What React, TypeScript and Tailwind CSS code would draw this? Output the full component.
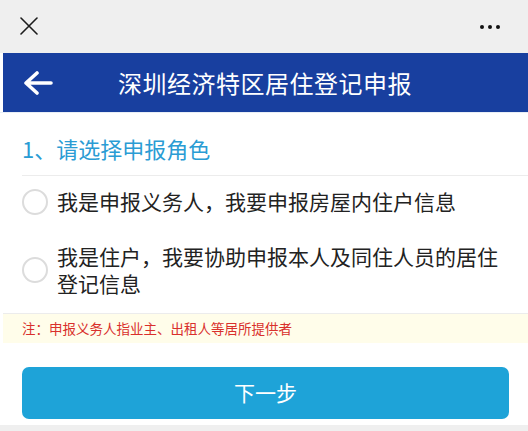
const font = { fontFamily: '"Noto Sans CJK SC", "Noto Sans", sans-serif' };

function Radio() {
  return <span className="w-[26px] h-[26px] rounded-full border-2 border-[#dcdcdc] bg-white shrink-0" />;
}

export default function App() {
  return (
    <div className="w-[528px] h-[431px] bg-white flex flex-col overflow-hidden" style={font}>
      <div className="h-[53px] bg-[#efefef] flex items-center justify-between pl-[20px] pr-[28px] shrink-0">
        <svg width="18" height="18" viewBox="0 0 18 18" className="-mt-[1px]">
          <path d="M1 1l16 16M17 1L1 17" stroke="#1c1c1c" strokeWidth="1.6" strokeLinecap="round" />
        </svg>
        <div className="flex gap-[4px]">
          <span className="w-[4px] h-[4px] rounded-full bg-[#111]" />
          <span className="w-[4px] h-[4px] rounded-full bg-[#111]" />
          <span className="w-[4px] h-[4px] rounded-full bg-[#111]" />
        </div>
      </div>
      <div className="h-[59px] bg-[#183f9f] ml-[3px] flex items-center shrink-0">
        <svg width="32" height="24" viewBox="0 0 32 24" className="ml-[19px]">
          <path d="M29 12H5M15 2L4 12l11 10" fill="none" stroke="#fff" strokeWidth="3.6" strokeLinecap="round" strokeLinejoin="round" />
        </svg>
        <span className="ml-[64px] text-white text-[24px] leading-none tracking-[0.5px]">深圳经济特区居住登记申报</span>
      </div>
      <div className="h-px bg-[#e8eef6] shrink-0" />
      <div className="ml-[22px] h-[63px] flex items-end pb-[16px] border-b border-[#ececec] shrink-0">
        <span className="text-[#2a9cd4] text-[22px] leading-none">1、请选择申报角色</span>
      </div>
      <div className="flex items-center gap-[9px] pl-[22px] h-[51px] shrink-0">
        <Radio />
        <span className="text-[#222] text-[21px] leading-none">我是申报义务人，我要申报房屋内住户信息</span>
      </div>
      <div className="flex items-center gap-[9px] pl-[22px] h-[86px] shrink-0">
        <Radio />
        <span className="w-[445px] text-[#222] text-[21px] leading-[27px]">我是住户，我要协助申报本人及同住人员的居住登记信息</span>
      </div>
      <div className="ml-[3px] h-[30px] bg-[#fffdea] border-t border-[#ececec] flex items-center pl-[19px] shrink-0">
        <span className="text-[#d9302c] text-[13.5px] leading-none">注：申报义务人指业主、出租人等居所提供者</span>
      </div>
      <div className="pt-[24px] pl-[22px] shrink-0">
        <button className="w-[487px] h-[52px] rounded-[7px] bg-[#1ea3d8] text-white text-[21px] flex items-center justify-center">
          下一步
        </button>
      </div>
      <div className="mt-[6px] flex-1 bg-[#efefef]" />
    </div>
  );
}
